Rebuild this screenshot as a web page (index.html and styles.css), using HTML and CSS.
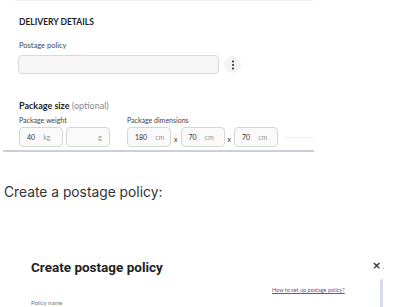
FILE: index.html
```html
<!DOCTYPE html>
<html>
<head>
<meta charset="utf-8">
<link rel="stylesheet" href="styles.css">
</head>
<body>
<div class="shot1">
  <div class="top-rule"></div>
  <div class="form">
    <div class="section-title">DELIVERY DETAILS</div>
    <div class="label">Postage policy</div>
    <div class="policy-row">
      <div class="select"></div>
      <div class="kebab">
        <svg width="4" height="10" viewBox="0 0 4 10"><circle cx="2" cy="1.5" r="1.1" fill="#333"/><circle cx="2" cy="5" r="1.1" fill="#333"/><circle cx="2" cy="8.5" r="1.1" fill="#333"/></svg>
      </div>
    </div>
    <div class="size-title"><b>Package size</b> <span class="muted">(optional)</span></div>
    <div class="size-row">
      <div class="group">
        <div class="small-label">Package weight</div>
        <div class="fields">
          <div class="field"><span class="val">40</span><span class="unit">kg</span></div>
          <div class="field end"><span class="unit">g</span></div>
        </div>
      </div>
      <div class="group">
        <div class="small-label">Package dimensions</div>
        <div class="fields">
          <div class="field"><span class="val">180</span><span class="unit">cm</span></div>
          <span class="times">x</span>
          <div class="field"><span class="val">70</span><span class="unit">cm</span></div>
          <span class="times">x</span>
          <div class="field"><span class="val">70</span><span class="unit">cm</span></div>
          <div class="faint-line"></div>
        </div>
      </div>
    </div>
  </div>
  <div class="bottom-rule"></div>
</div>
<p class="caption">Create a postage policy:</p>
<div class="shot2">
  <div class="modal-head">
    <h2 class="modal-title">Create postage policy</h2>
    <span class="close">×</span><span class="dot"></span>
  </div>
  <div class="modal-body">
    <div class="policy-name">Policy name</div>
    <a class="help" href="#">How to set up postage policy?</a>
    <div class="scrollbar"></div>
  </div>
</div>
</body>
</html>
```
FILE: styles.css
```css
* { box-sizing: border-box; }
html, body { margin: 0; padding: 0; background: #fff; overflow: hidden; }
body { width: 400px; height: 307px; font-family: Lato, "Open Sans", sans-serif; color: #222; }

.shot1 { width: 316px; }
.top-rule { margin-left: 15px; width: 298px; height: 1px; background: #f0f0f0; }
.form { padding-left: 19px; padding-top: 16px; }
.section-title { font-weight: 700; font-size: 8.5px; line-height: 10px; color: #222; }
.label { margin-top: 14px; font-size: 7.5px; line-height: 9px; color: #444; }
.policy-row { display: flex; align-items: center; margin-top: 5px; margin-left: -1px; }
.select { width: 201px; height: 19px; border: 1px solid #d9d9d9; border-radius: 4px; background: #f7f7f7; }
.kebab { width: 17px; height: 17px; border-radius: 50%; background: #f4f4f4; margin-left: 5px; display: flex; align-items: center; justify-content: center; }
.size-title { margin-top: 27px; font-size: 9px; line-height: 10px; color: #222; }
.size-title .muted { color: #8a8a8a; font-weight: 400; }
.size-row { display: flex; gap: 17px; margin-top: 5px; }
.small-label { font-size: 7px; line-height: 9px; color: #444; }
.fields { display: flex; align-items: center; gap: 3px; margin-top: 2px; }
.field { width: 44px; height: 20px; border: 1px solid #d6d6d6; border-radius: 4px; background: #fafafa; display: flex; align-items: center; padding: 0 7px; font-size: 7px; gap: 8px; }
.field.end { justify-content: flex-end; }
.val { color: #333; }
.unit { color: #999; }
.times { font-size: 7px; color: #333; margin-top: 4px; }
.faint-line { width: 31px; height: 1px; background: #f0f2f4; margin-left: 2px; }
.bottom-rule { margin-top: 3px; margin-left: 3px; width: 311px; height: 2px; background: #c9d0d7; }

.caption { margin: 33px 0 0 4px; font-family: Inter, "Open Sans", sans-serif; font-size: 13.8px; line-height: 15px; color: #333; }

.shot2 { margin-top: 59px; position: relative; }
.modal-head { display: flex; align-items: center; padding-left: 31px; }
.modal-title { margin: 0; font-family: Roboto, "Open Sans", sans-serif; font-weight: 700; font-size: 13.5px; line-height: 16px; color: #222; }
.close { position: absolute; left: 372px; top: 0; font-size: 11px; font-weight: 700; font-family: "DejaVu Sans", sans-serif; color: #333; }
.dot { position: absolute; left: 383px; top: 9px; width: 1px; height: 1px; background: #aaa; }
.modal-body { position: relative; height: 40px; }
.policy-name { position: absolute; left: 31px; top: 24px; font-size: 6px; line-height: 7px; color: #777; }
.help { position: absolute; left: 272px; top: 12px; font-size: 5.5px; color: #7a4d86; text-decoration: underline; font-family: Lato, sans-serif; }
.scrollbar { position: absolute; left: 380px; top: 4px; width: 3px; height: 30px; background: #d7dce6; border-radius: 1px; }
```
